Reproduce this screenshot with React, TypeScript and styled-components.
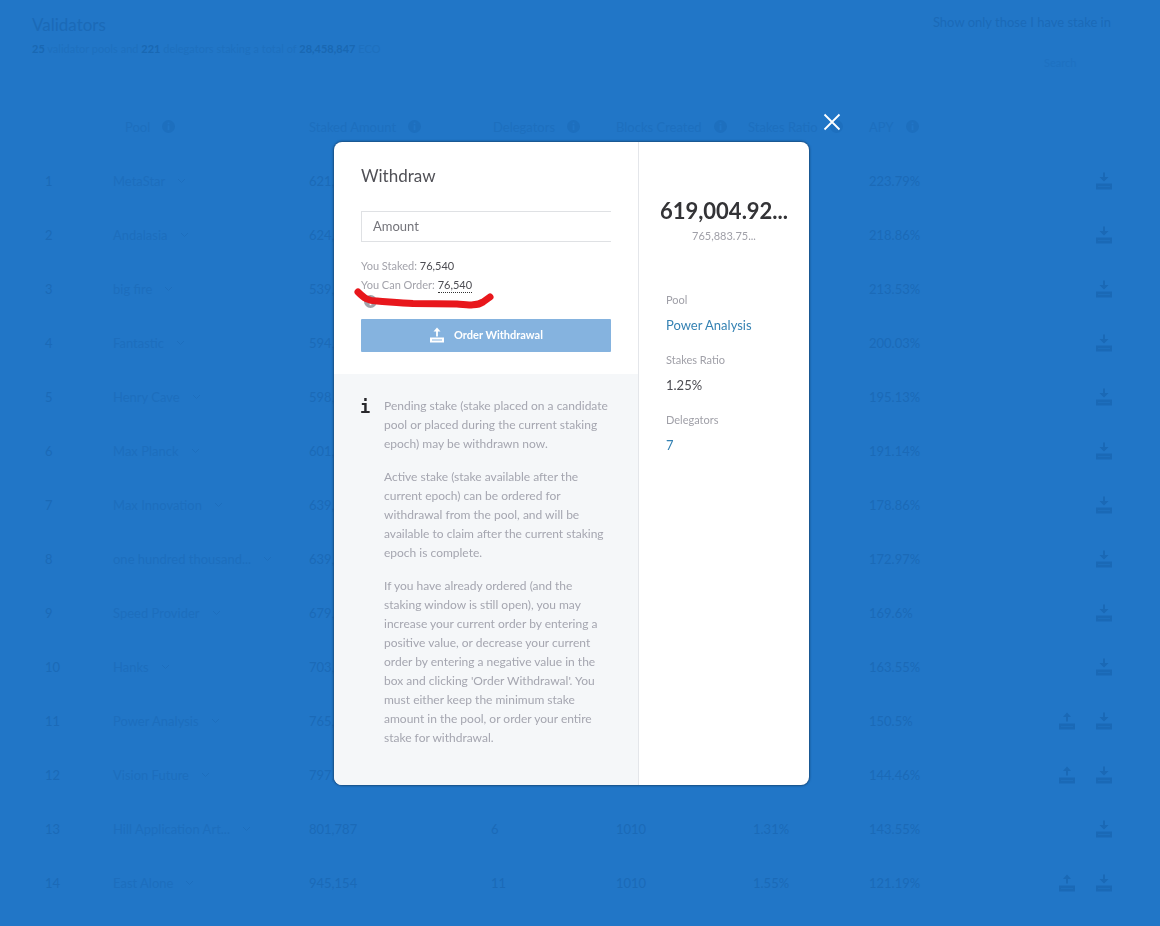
import React from "react";
import styled, { createGlobalStyle } from "styled-components";

const GlobalStyle = createGlobalStyle`
  * { box-sizing: border-box; }
  html, body { margin: 0; }
  body {
    background: #2176c7;
    font-family: Lato, "Open Sans", sans-serif;
    overflow: hidden;
  }
  h1, h2, p, dl, dd { margin: 0; font-weight: 400; }
  button, input { font-family: inherit; }
`;

const Page = styled.main`
  min-height: 100vh;
  padding: 12px 47px 0 32px;
  color: #1b6ab7;
`;

const Header = styled.header`
  display: flex;
  justify-content: space-between;
  height: 87px;
`;

const Title = styled.h1`
  font-size: 17px;
  line-height: 26px;
`;

const Summary = styled.p`
  font-size: 11px;
  line-height: 22px;
  color: #1e70be;
  b { color: #1968b3; }
`;

const Filters = styled.div`
  display: flex;
  flex-direction: column;
  align-items: flex-end;
  gap: 20px;
  padding-right: 2px;
`;

const FilterLabel = styled.span`
  font-size: 13px;
  line-height: 20px;
`;

const Search = styled.input`
  width: 67px;
  height: 20px;
  padding: 0;
  border: 0;
  background: transparent;
  color: #1c6ebe;
  font-size: 11px;
  &::placeholder { color: #1e71c1; opacity: 1; }
`;

const Table = styled.table`
  width: 100%;
  table-layout: fixed;
  border-collapse: collapse;
  font-size: 13px;
`;

const Col = styled.col<{ $width?: number }>`
  width: ${(p) => (p.$width ? `${p.$width}px` : "auto")};
`;

const Th = styled.th<{ $indent?: number }>`
  height: 55px;
  padding: 0 0 0 ${(p) => p.$indent ?? 0}px;
  text-align: left;
  font-weight: 400;
  font-size: 13px;
  white-space: nowrap;
  color: #1d6fbe;
`;

const ThInner = styled.span`
  display: flex;
  align-items: center;
  gap: 12px;
`;

const Td = styled.td<{ $indent?: number }>`
  height: 54px;
  padding: 0 0 0 ${(p) => p.$indent ?? 0}px;
  white-space: nowrap;
`;

const PoolName = styled.span`
  display: flex;
  align-items: center;
  gap: 12px;
  color: #1d6ebd;
`;

const Actions = styled.div`
  display: flex;
  justify-content: flex-end;
  gap: 19px;
`;

const IconButton = styled.button`
  display: flex;
  padding: 0;
  border: 0;
  background: transparent;
  color: #1a69b6;
`;

const Overlay = styled.div`
  position: fixed;
  inset: 0;
  display: flex;
  align-items: center;
  justify-content: center;
  padding-right: 17px;
`;

const Modal = styled.section`
  position: relative;
  display: flex;
  width: 475px;
  border-radius: 8px;
  background: #fff;
  box-shadow: 0 0 2px 1px rgba(20, 60, 100, 0.7);
`;

const Close = styled.button`
  position: absolute;
  top: -29px;
  right: -32px;
  display: flex;
  padding: 0;
  border: 0;
  background: transparent;
  color: #fff;
`;

const FormColumn = styled.div`
  flex: 1;
  border-right: 1px solid #e4e6ea;
`;

const Form = styled.form`
  display: flex;
  flex-direction: column;
  padding: 21px 27px 22px;
`;

const ModalTitle = styled.h2`
  font-size: 17px;
  line-height: 26px;
  color: #505056;
`;

const Amount = styled.input`
  height: 31px;
  margin-top: 22px;
  padding: 0 11px;
  border: 1px solid #dfe1e4;
  border-right: 0;
  border-radius: 0;
  background: #fff;
  font-size: 13px;
  &::placeholder { color: #74747a; opacity: 1; }
`;

const Stakes = styled.div`
  position: relative;
  margin-top: 14px;
  height: 63px;
  font-size: 11px;
  line-height: 19px;
  color: #a3a3ab;
  b { font-weight: 400; color: #4c4c52; }
  b[data-link] { padding-bottom: 1px; border-bottom: 1px dotted #333; }
`;

const HelpDot = styled.div`
  display: flex;
  padding: 1px 0 0 3px;
  color: #a0a2a9;
`;

const Marker = styled.svg`
  position: absolute;
  left: -8px;
  top: 27px;
`;

const Submit = styled.button`
  display: flex;
  align-items: center;
  justify-content: center;
  gap: 9px;
  height: 33px;
  padding: 0 6px 2px;
  border: 0;
  border-radius: 1px;
  background: #85b3df;
  color: #fff;
  font-size: 11px;
  font-weight: 700;
  svg { margin-top: 2px; }
`;

const Notice = styled.div`
  display: flex;
  gap: 15px;
  padding: 22px 0 38px 26px;
  border-bottom-left-radius: 8px;
  background: #f5f7f9;
`;

const NoticeMark = styled.span`
  width: 9px;
  font-family: "DejaVu Sans Mono", monospace;
  font-size: 17px;
  font-weight: 700;
  line-height: 23px;
  color: #28282c;
`;

const NoticeText = styled.div`
  display: flex;
  flex-direction: column;
  gap: 14px;
  font-size: 12px;
  line-height: 19px;
  color: #a5a6b0;
  white-space: pre-line;
`;

const Details = styled.aside`
  width: 170px;
  padding: 55px 0 0;
`;

const Total = styled.p`
  text-align: center;
  font-size: 22px;
  font-weight: 700;
  line-height: 28px;
  color: #333336;
`;

const SubTotal = styled.p`
  margin-bottom: 43px;
  text-align: center;
  font-size: 11px;
  line-height: 22px;
  color: #a0a0a8;
`;

const Facts = styled.dl`
  padding-left: 27px;
  line-height: 20px;
`;

const FactLabel = styled.dt`
  font-size: 11px;
  color: #a0a0a8;
`;

const FactValue = styled.dd`
  padding: 5px 0 15px;
  font-size: 13px;
  color: #4c4c52;
`;

const Link = styled.a`
  color: #3582b3;
  text-decoration: none;
`;

const InfoIcon = () => (
  <svg width="13" height="13" viewBox="0 0 13 13" aria-hidden="true">
    <path
      fillRule="evenodd"
      fill="currentColor"
      d="M6.500 0a6.500 6.500 0 1 0 0 13a6.500 6.500 0 0 0 0-13zM5.600 2.600h1.800v1.600H5.600zM5.600 5.300h1.800v5H5.600z"
    />
  </svg>
);

const StakeIcon = () => (
  <svg width="18" height="18" viewBox="0 0 18 18" aria-hidden="true">
    <path fill="currentColor" d="M8 0.500h2V5h3.500L9 9.500L4.500 5H8z" />
    <path fill="currentColor" d="M1 11.500h16v6H1z" />
    <path fill="#1d6fbe" d="M3 14h12v1H3z" />
  </svg>
);

const WithdrawIcon = () => (
  <svg width="18" height="18" viewBox="0 0 18 18" aria-hidden="true">
    <path fill="currentColor" d="M9 0.500L13 5H10V9.500H8V5H5z" />
    <path fill="currentColor" d="M1 11.500h16v6H1z" />
    <path fill="#1d6fbe" d="M3 14h12v1H3z" />
  </svg>
);

const OrderIcon = () => (
  <svg width="16" height="16" viewBox="0 0 16 16" aria-hidden="true">
    <path fill="currentColor" d="M8 0.500L11.500 4.500H8.900V9.500H7.100V4.500H4.500z" />
    <path fill="currentColor" fillRule="evenodd" d="M1 10.500h14v5H1zM3 12.600v0.800h10v-0.800z" />
  </svg>
);

const Chevron = () => (
  <svg width="9" height="6" viewBox="0 0 9 6" aria-hidden="true">
    <path d="M1 1l3.500 3.500L8 1" fill="none" stroke="currentColor" strokeWidth="1" />
  </svg>
);

const columns = [
  { label: "Pool", indent: 12 },
  { label: "Staked Amount" },
  { label: "Delegators", indent: 2 },
  { label: "Blocks Created" },
  { label: "Stakes Ratio" },
  { label: "APY" },
];

type Row = {
  name: string;
  amount: string;
  apy: string;
  up?: boolean;
  rest?: [string, string, string];
};

const rows: Row[] = [
  { name: "MetaStar", amount: "621,", apy: "223.79%" },
  { name: "Andalasia", amount: "624,", apy: "218.86%" },
  { name: "big fire", amount: "539,", apy: "213.53%" },
  { name: "Fantastic", amount: "594,", apy: "200.03%" },
  { name: "Henry Cave", amount: "598,", apy: "195.13%" },
  { name: "Max Planck", amount: "601,", apy: "191.14%" },
  { name: "Max Innovation", amount: "639,", apy: "178.86%" },
  { name: "one hundred thousand...", amount: "639,", apy: "172.97%" },
  { name: "Speed Provider", amount: "679,", apy: "169.6%" },
  { name: "Hanks", amount: "703,", apy: "163.55%" },
  { name: "Power Analysis", amount: "765,", apy: "150.5%", up: true },
  { name: "Vision Future", amount: "797,", apy: "144.46%", up: true },
  { name: "Hill Application Art...", amount: "801,787", apy: "143.55%", rest: ["6", "1010", "1.31%"] },
  { name: "East Alone", amount: "945,154", apy: "121.19%", up: true, rest: ["11", "1010", "1.55%"] },
];

const notices = [
  "Pending stake (stake placed on a candidate\npool or placed during the current staking\nepoch) may be withdrawn now.",
  "Active stake (stake available after the\ncurrent epoch) can be ordered for\nwithdrawal from the pool, and will be\navailable to claim after the current staking\nepoch is complete.",
  "If you have already ordered (and the\nstaking window is still open), you may\nincrease your current order by entering a\npositive value, or decrease your current\norder by entering a negative value in the\nbox and clicking 'Order Withdrawal'. You\nmust either keep the minimum stake\namount in the pool, or order your entire\nstake for withdrawal.",
];

export default function App() {
  return (
    <>
      <GlobalStyle />
      <Page>
        <Header>
          <div>
            <Title>Validators</Title>
            <Summary>
              <b>25</b> validator pools and <b>221</b> delegators staking a total of <b>28,458,847</b> ECO
            </Summary>
          </div>
          <Filters>
            <FilterLabel>Show only those I have stake in</FilterLabel>
            <Search aria-label="Search" placeholder="Search" />
          </Filters>
        </Header>
        <Table>
          <colgroup>
            <Col $width={81} />
            <Col $width={196} />
            <Col $width={182} />
            <Col $width={125} />
            <Col $width={132} />
            <Col $width={121} />
            <Col $width={90} />
            <Col />
          </colgroup>
          <thead>
            <tr>
              <Th />
              {columns.map((c) => (
                <Th key={c.label} $indent={c.indent}>
                  <ThInner>
                    {c.label}
                    <InfoIcon />
                  </ThInner>
                </Th>
              ))}
              <Th />
            </tr>
          </thead>
          <tbody>
            {rows.map((r, i) => (
              <tr key={r.name}>
                <Td $indent={13}>{i + 1}</Td>
                <Td>
                  <PoolName>
                    {r.name}
                    <Chevron />
                  </PoolName>
                </Td>
                <Td>{r.amount}</Td>
                <Td>{r.rest?.[0]}</Td>
                <Td>{r.rest?.[1]}</Td>
                <Td $indent={5}>{r.rest?.[2]}</Td>
                <Td>{r.apy}</Td>
                <Td>
                  <Actions>
                    {r.up && (
                      <IconButton aria-label="Withdraw">
                        <WithdrawIcon />
                      </IconButton>
                    )}
                    <IconButton aria-label="Stake">
                      <StakeIcon />
                    </IconButton>
                  </Actions>
                </Td>
              </tr>
            ))}
          </tbody>
        </Table>
      </Page>
      <Overlay>
        <Modal role="dialog" aria-labelledby="withdraw-title">
          <Close aria-label="Close">
            <svg width="18" height="18" viewBox="0 0 18 18" aria-hidden="true">
              <path d="M1.500 1.500l15 15M16.500 1.500l-15 15" stroke="currentColor" strokeWidth="1.800" />
            </svg>
          </Close>
          <FormColumn>
            <Form onSubmit={(e) => e.preventDefault()}>
              <ModalTitle id="withdraw-title">Withdraw</ModalTitle>
              <Amount aria-label="Amount" placeholder="Amount" />
              <Stakes>
                <p>
                  You Staked: <b>76,540</b>
                </p>
                <p>
                  You Can Order: <b data-link>76,540</b>
                </p>
                <HelpDot>
                  <InfoIcon />
                </HelpDot>
                <Marker width="144" height="28" viewBox="0 0 144 28" aria-hidden="true">
                  <path
                    d="M5 9C11 15 15 18 24 18C38 19 48 20 60 20.500L104 21C116 22 124 23 130 19L137 14"
                    fill="none"
                    stroke="#e8171c"
                    strokeWidth="7"
                    strokeLinecap="round"
                    strokeLinejoin="round"
                  />
                </Marker>
              </Stakes>
              <Submit type="submit">
                <OrderIcon />
                Order Withdrawal
              </Submit>
            </Form>
            <Notice>
              <NoticeMark>i</NoticeMark>
              <NoticeText>
                {notices.map((n) => (
                  <p key={n}>{n}</p>
                ))}
              </NoticeText>
            </Notice>
          </FormColumn>
          <Details>
            <Total>619,004.92...</Total>
            <SubTotal>765,883.75...</SubTotal>
            <Facts>
              <FactLabel>Pool</FactLabel>
              <FactValue>
                <Link href="#pool">Power Analysis</Link>
              </FactValue>
              <FactLabel>Stakes Ratio</FactLabel>
              <FactValue>1.25%</FactValue>
              <FactLabel>Delegators</FactLabel>
              <FactValue>
                <Link href="#delegators">7</Link>
              </FactValue>
            </Facts>
          </Details>
        </Modal>
      </Overlay>
    </>
  );
}
